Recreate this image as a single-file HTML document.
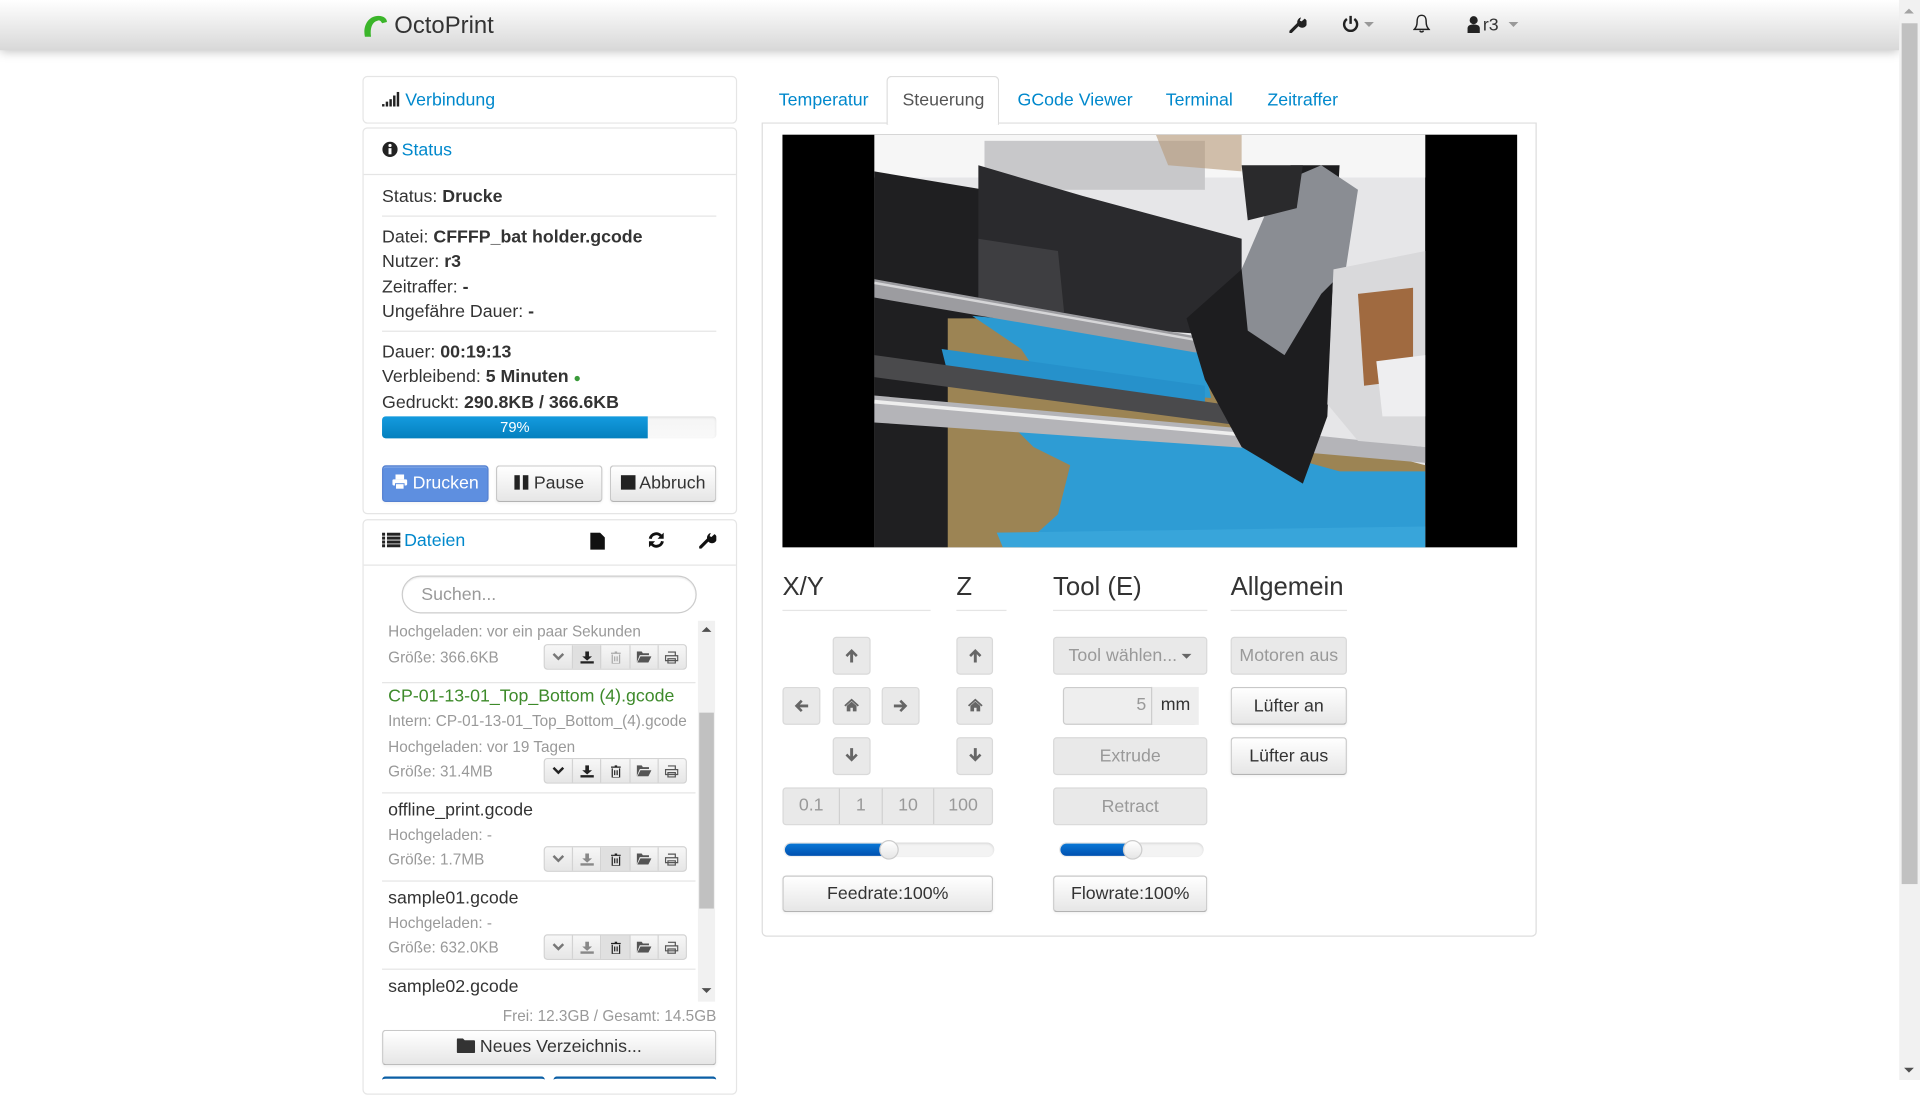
<!DOCTYPE html>
<html><head><meta charset="utf-8">
<style>
html,body{margin:0;padding:0;width:1920px;height:1080px;overflow:hidden;background:#fff}
#w{position:absolute;left:0;top:0;width:1568px;height:882px;transform:scale(1.22449);transform-origin:0 0;font-family:"Liberation Sans",Arial,sans-serif;color:#333;font-size:14.5px}
.a{position:absolute;white-space:nowrap}
.lnk{color:#0088cc}
.box{position:absolute;border:1px solid #e5e5e5;border-radius:4px;background:#fff;box-sizing:border-box}
.hr{position:absolute;height:1px;background:#e5e5e5}
.btn{position:absolute;box-sizing:border-box;border:1px solid #c8c8c8;border-bottom-color:#b3b3b3;border-radius:3px;background:linear-gradient(#fff,#e6e6e6);text-align:center;color:#333;font-size:14.5px;box-shadow:inset 0 1px 0 rgba(255,255,255,.2),0 1px 2px rgba(0,0,0,.05)}
.dis{background:#e9e9e9;color:#999;border-color:#d9d9d9;box-shadow:none}
.meta{position:absolute;font-size:12.5px;color:#999;white-space:nowrap}
.fn{position:absolute;font-size:14.5px;color:#333;white-space:nowrap}
.bg{position:absolute;height:21px;width:117px;border:1px solid #d3d3d3;border-radius:3px;background:linear-gradient(#f7f7f7,#e6e6e6);box-sizing:border-box;display:flex}
.bg span{flex:1;border-right:1px solid #d3d3d3;display:flex;align-items:center;justify-content:center}
.bg span:last-child{border-right:none}
h3{margin:0;font-weight:normal;font-size:21px;position:absolute}
</style></head><body><div id="w">

<!-- navbar -->
<div class="a" style="left:0;top:0;width:1551px;height:41px;background:linear-gradient(#fff,#d8d8d8);box-shadow:0 1px 8px rgba(0,0,0,.25)"></div>
<svg class="a" style="left:295px;top:11px" width="22" height="20" viewBox="0 0 22 20"><path d="M3 19 C1 10 6 2 14 2 C18 2 21 4 21 7 L17 8 C16 6 15 5 13 6 C9 7 7 12 8 19 Z" fill="#3bb52a"/></svg>
<div class="a" style="left:322px;top:10px;font-size:19.5px;color:#333">OctoPrint</div>
<svg class="a" style="left:1053px;top:13px" width="14" height="14" viewBox="0 0 14 14"><path d="M1 13 L7 7" stroke="#222" stroke-width="2.6" stroke-linecap="round"/><path d="M6.5 6 A4 4 0 1 0 12.5 2.2 L10 4.5 L8.5 3.8 L9.5 1.2 A4 4 0 0 0 6.5 6Z" fill="#222"/></svg>
<svg class="a" style="left:1096px;top:12px" width="14" height="15" viewBox="0 0 14 15"><path d="M4 3.5 A5.3 5.3 0 1 0 10 3.5" fill="none" stroke="#222" stroke-width="2"/><path d="M7 1 V7.5" stroke="#222" stroke-width="2"/></svg>
<div class="a" style="left:1114px;top:18px;border:4px solid transparent;border-top-color:#999;border-bottom:0"></div>
<svg class="a" style="left:1154px;top:11px" width="14" height="17" viewBox="0 0 14 17"><path d="M7 1.5 C3.8 1.5 3.3 4 3.3 7 C3.3 10 2.5 11.5 1 13 H13 C11.5 11.5 10.7 10 10.7 7 C10.7 4 10.2 1.5 7 1.5Z M5.5 14 A1.6 1.6 0 0 0 8.5 14" fill="none" stroke="#222" stroke-width="1.2"/></svg>
<svg class="a" style="left:1198px;top:13px" width="11" height="14" viewBox="0 0 11 14"><circle cx="5.5" cy="3.5" r="3.3" fill="#222"/><path d="M0.5 14 V10 C0.5 8 2.5 7 5.5 7 C8.5 7 10.5 8 10.5 10 V14Z" fill="#222"/></svg>
<div class="a" style="left:1211px;top:13px;font-size:14.5px">r3</div>
<div class="a" style="left:1232px;top:18px;border:4px solid transparent;border-top-color:#999;border-bottom:0"></div>

<!-- page scrollbar -->
<div class="a" style="left:1551px;top:0;width:17px;height:882px;background:#f1f1f1"></div>
<div class="a" style="left:1553px;top:19px;width:13px;height:703px;background:#c1c1c1"></div>
<div class="a" style="left:1555px;top:7px;border:4px solid transparent;border-bottom-color:#a3a3a3;border-top:0"></div>
<div class="a" style="left:1555px;top:872px;border:4px solid transparent;border-top-color:#505050;border-bottom:0"></div>

<!-- Left: Verbindung -->
<div class="box" style="left:296px;top:62px;width:306px;height:39px"></div>
<svg class="a" style="left:312px;top:75px" width="15" height="12" viewBox="0 0 15 12"><rect x="0" y="10" width="2" height="2" fill="#222"/><rect x="3" y="8" width="2" height="4" fill="#222"/><rect x="6" y="6" width="2" height="6" fill="#222"/><rect x="9" y="3" width="2" height="9" fill="#222"/><rect x="12" y="0" width="2" height="12" fill="#222"/></svg>
<div class="a lnk" style="left:331px;top:74px">Verbindung</div>

<!-- Status -->
<div class="box" style="left:296px;top:104px;width:306px;height:316px"></div>
<div class="hr" style="left:297px;top:142px;width:304px"></div>
<svg class="a" style="left:312px;top:115px" width="13" height="14" viewBox="0 0 13 14"><circle cx="6.5" cy="7" r="6.2" fill="#222"/><circle cx="6.5" cy="3.8" r="1.3" fill="#fff"/><rect x="5.3" y="6" width="2.4" height="5" fill="#fff"/></svg>
<div class="a lnk" style="left:328px;top:115px">Status</div>
<div class="a" style="left:312px;top:153px">Status: <b>Drucke</b></div>
<div class="hr" style="left:312px;top:176px;width:273px"></div>
<div class="a" style="left:312px;top:186px">Datei: <b>CFFFP_bat holder.gcode</b></div>
<div class="a" style="left:312px;top:206px">Nutzer: <b>r3</b></div>
<div class="a" style="left:312px;top:227px">Zeitraffer: <b>-</b></div>
<div class="a" style="left:312px;top:247px">Ungefähre Dauer: <b>-</b></div>
<div class="hr" style="left:312px;top:270px;width:273px"></div>
<div class="a" style="left:312px;top:280px">Dauer: <b>00:19:13</b></div>
<div class="a" style="left:312px;top:300px">Verbleibend: <b>5 Minuten</b> <span style="color:#3a9a3a;font-size:10px">●</span></div>
<div class="a" style="left:312px;top:321px">Gedruckt: <b>290.8KB / 366.6KB</b></div>
<div class="a" style="left:312px;top:340px;width:273px;height:18px;border-radius:3px;background:linear-gradient(#f5f5f5,#f9f9f9);box-shadow:inset 0 1px 2px rgba(0,0,0,.1)"></div>
<div class="a" style="left:312px;top:340px;width:217px;height:18px;border-radius:3px 0 0 3px;background:linear-gradient(#149bdf,#0480be);color:#fff;font-size:12px;text-align:center;line-height:18px">79%</div>
<div class="btn" style="left:312px;top:380px;width:87px;height:30px;line-height:28px;background:#5e8fe0;border-color:#5480d0;color:#fff">
<svg width="13" height="13" viewBox="0 0 13 13" style="vertical-align:-1px"><rect x="3" y="0.5" width="7" height="4" fill="#fff"/><rect x="0.5" y="4.5" width="12" height="5" rx="1" fill="#fff"/><rect x="3" y="8" width="7" height="4.5" fill="#fff" stroke="#5e8fe0" stroke-width="0.8"/></svg> Drucken</div>
<div class="btn" style="left:405px;top:380px;width:87px;height:30px;line-height:28px"><svg width="12" height="12" viewBox="0 0 12 12" style="vertical-align:-1px"><rect x="0" y="0" width="4.5" height="12" fill="#222"/><rect x="7" y="0" width="4.5" height="12" fill="#222"/></svg> Pause</div>
<div class="btn" style="left:498px;top:380px;width:87px;height:30px;line-height:28px"><svg width="12" height="12" viewBox="0 0 12 12" style="vertical-align:-1px"><rect width="12" height="12" fill="#222"/></svg> Abbruch</div>

<!-- Dateien -->
<div class="box" style="left:296px;top:424px;width:306px;height:470px"></div>
<div class="hr" style="left:297px;top:461px;width:304px"></div>
<svg class="a" style="left:312px;top:435px" width="15" height="12" viewBox="0 0 15 12"><g fill="#222"><rect x="0" y="0" width="2.5" height="2.5"/><rect x="4" y="0" width="11" height="2.5"/><rect x="0" y="3.2" width="2.5" height="2.5"/><rect x="4" y="3.2" width="11" height="2.5"/><rect x="0" y="6.4" width="2.5" height="2.5"/><rect x="4" y="6.4" width="11" height="2.5"/><rect x="0" y="9.5" width="2.5" height="2.5"/><rect x="4" y="9.5" width="11" height="2.5"/></g></svg>
<div class="a lnk" style="left:330px;top:434px">Dateien</div>
<svg class="a" style="left:482px;top:435px" width="12" height="14" viewBox="0 0 12 14"><path d="M0 0 H8 L12 4 V14 H0Z" fill="#111"/></svg>
<svg class="a" style="left:529px;top:434px" width="14" height="14" viewBox="0 0 14 14"><path d="M2 6 A5 5 0 0 1 11 4" fill="none" stroke="#111" stroke-width="2.4"/><path d="M13 1 V6 H8Z" fill="#111"/><path d="M12 8 A5 5 0 0 1 3 10" fill="none" stroke="#111" stroke-width="2.4"/><path d="M1 13 V8 H6Z" fill="#111"/></svg>
<svg class="a" style="left:571px;top:434px" width="14" height="14" viewBox="0 0 14 14"><path d="M1 13 L7 7" stroke="#111" stroke-width="2.6" stroke-linecap="round"/><path d="M6.5 6 A4 4 0 1 0 12.5 2.2 L10 4.5 L8.5 3.8 L9.5 1.2 A4 4 0 0 0 6.5 6Z" fill="#111"/></svg>
<div class="a" style="left:328px;top:470px;width:241px;height:31px;border:1px solid #ccc;border-radius:16px;box-sizing:border-box;box-shadow:inset 0 1px 1px rgba(0,0,0,.075)"></div>
<div class="a" style="left:344px;top:478px;color:#999">Suchen...</div>
<!-- list scrollbar -->
<div class="a" style="left:570px;top:507px;width:14px;height:311px;background:#f1f1f1"></div>
<div class="a" style="left:571px;top:582px;width:12px;height:160px;background:#c1c1c1"></div>
<div class="a" style="left:573px;top:512px;border:4px solid transparent;border-bottom-color:#505050;border-top:0"></div>
<div class="a" style="left:573px;top:807px;border:4px solid transparent;border-top-color:#505050;border-bottom:0"></div>

<div class="meta" style="left:317px;top:509px">Hochgeladen: vor ein paar Sekunden</div>
<div class="meta" style="left:317px;top:530px">Größe: 366.6KB</div>
<div class="hr" style="left:312px;top:557px;width:256px"></div>
<div class="fn" style="left:317px;top:561px;color:#3d8a2a">CP-01-13-01_Top_Bottom (4).gcode</div>
<div class="meta" style="left:317px;top:582px">Intern: CP-01-13-01_Top_Bottom_(4).gcode</div>
<div class="meta" style="left:317px;top:603px">Hochgeladen: vor 19 Tagen</div>
<div class="meta" style="left:317px;top:623px">Größe: 31.4MB</div>
<div class="hr" style="left:312px;top:647px;width:256px"></div>
<div class="fn" style="left:317px;top:654px">offline_print.gcode</div>
<div class="meta" style="left:317px;top:675px">Hochgeladen: -</div>
<div class="meta" style="left:317px;top:695px">Größe: 1.7MB</div>
<div class="hr" style="left:312px;top:719px;width:256px"></div>
<div class="fn" style="left:317px;top:726px">sample01.gcode</div>
<div class="meta" style="left:317px;top:747px">Hochgeladen: -</div>
<div class="meta" style="left:317px;top:767px">Größe: 632.0KB</div>
<div class="hr" style="left:312px;top:791px;width:256px"></div>
<div class="fn" style="left:317px;top:798px">sample02.gcode</div>

<!-- button groups -->
<div class="bg" style="left:444px;top:526px"><span><svg width="10" height="7" viewBox="0 0 10 7"><path d="M1 1 L5 5 L9 1" fill="none" stroke="#777" stroke-width="2"/></svg></span><span style="background:#e0e0e0"><svg width="11" height="10" viewBox="0 0 11 10"><path d="M4 0 H7 V4 H9.5 L5.5 7.5 L1.5 4 H4Z M0 8 H11 V10 H0Z" fill="#222"/></svg></span><span><svg width="8" height="10" viewBox="0 0 8 10"><path d="M0 1.5 H8 M1 2.5 V10 H7 V2.5 M3 0.5 H5 M3 4 V8 M5 4 V8" fill="none" stroke="#aaa" stroke-width="1"/></svg></span><span><svg width="12" height="9" viewBox="0 0 12 9"><path d="M0 0 H4 L5 1.5 H10 V3 H2.5 L0 9Z M3 4 H12 L9.5 9 H0.5Z" fill="#555"/></svg></span><span><svg width="11" height="10" viewBox="0 0 11 10"><path d="M2.5 0.5 H8.5 V3 M0.5 3.5 H10.5 V7.5 H0.5Z M2.5 6 H8.5 V9.5 H2.5Z" fill="none" stroke="#555" stroke-width="1"/></svg></span></div>
<div class="bg" style="left:444px;top:619px"><span><svg width="10" height="7" viewBox="0 0 10 7"><path d="M1 1 L5 5 L9 1" fill="none" stroke="#222" stroke-width="2"/></svg></span><span><svg width="11" height="10" viewBox="0 0 11 10"><path d="M4 0 H7 V4 H9.5 L5.5 7.5 L1.5 4 H4Z M0 8 H11 V10 H0Z" fill="#222"/></svg></span><span><svg width="8" height="10" viewBox="0 0 8 10"><path d="M0 1.5 H8 M1 2.5 V10 H7 V2.5 M3 0.5 H5 M3 4 V8 M5 4 V8" fill="none" stroke="#222" stroke-width="1"/></svg></span><span><svg width="12" height="9" viewBox="0 0 12 9"><path d="M0 0 H4 L5 1.5 H10 V3 H2.5 L0 9Z M3 4 H12 L9.5 9 H0.5Z" fill="#555"/></svg></span><span><svg width="11" height="10" viewBox="0 0 11 10"><path d="M2.5 0.5 H8.5 V3 M0.5 3.5 H10.5 V7.5 H0.5Z M2.5 6 H8.5 V9.5 H2.5Z" fill="none" stroke="#555" stroke-width="1"/></svg></span></div>
<div class="bg" style="left:444px;top:691px"><span><svg width="10" height="7" viewBox="0 0 10 7"><path d="M1 1 L5 5 L9 1" fill="none" stroke="#777" stroke-width="2"/></svg></span><span><svg width="11" height="10" viewBox="0 0 11 10"><path d="M4 0 H7 V4 H9.5 L5.5 7.5 L1.5 4 H4Z M0 8 H11 V10 H0Z" fill="#888"/></svg></span><span style="background:#e0e0e0"><svg width="8" height="10" viewBox="0 0 8 10"><path d="M0 1.5 H8 M1 2.5 V10 H7 V2.5 M3 0.5 H5 M3 4 V8 M5 4 V8" fill="none" stroke="#222" stroke-width="1"/></svg></span><span><svg width="12" height="9" viewBox="0 0 12 9"><path d="M0 0 H4 L5 1.5 H10 V3 H2.5 L0 9Z M3 4 H12 L9.5 9 H0.5Z" fill="#555"/></svg></span><span><svg width="11" height="10" viewBox="0 0 11 10"><path d="M2.5 0.5 H8.5 V3 M0.5 3.5 H10.5 V7.5 H0.5Z M2.5 6 H8.5 V9.5 H2.5Z" fill="none" stroke="#555" stroke-width="1"/></svg></span></div>
<div class="bg" style="left:444px;top:763px"><span><svg width="10" height="7" viewBox="0 0 10 7"><path d="M1 1 L5 5 L9 1" fill="none" stroke="#777" stroke-width="2"/></svg></span><span><svg width="11" height="10" viewBox="0 0 11 10"><path d="M4 0 H7 V4 H9.5 L5.5 7.5 L1.5 4 H4Z M0 8 H11 V10 H0Z" fill="#888"/></svg></span><span style="background:#e0e0e0"><svg width="8" height="10" viewBox="0 0 8 10"><path d="M0 1.5 H8 M1 2.5 V10 H7 V2.5 M3 0.5 H5 M3 4 V8 M5 4 V8" fill="none" stroke="#222" stroke-width="1"/></svg></span><span><svg width="12" height="9" viewBox="0 0 12 9"><path d="M0 0 H4 L5 1.5 H10 V3 H2.5 L0 9Z M3 4 H12 L9.5 9 H0.5Z" fill="#555"/></svg></span><span><svg width="11" height="10" viewBox="0 0 11 10"><path d="M2.5 0.5 H8.5 V3 M0.5 3.5 H10.5 V7.5 H0.5Z M2.5 6 H8.5 V9.5 H2.5Z" fill="none" stroke="#555" stroke-width="1"/></svg></span></div>

<div class="meta" style="right:983px;top:823px">Frei: 12.3GB / Gesamt: 14.5GB</div>
<div class="btn" style="left:312px;top:841px;width:273px;height:29px;line-height:27px"><svg width="15" height="12" viewBox="0 0 15 12" style="vertical-align:-1px"><path d="M0 1 Q0 0 1 0 H5 L6.5 1.5 H14 Q15 1.5 15 2.5 V11 Q15 12 14 12 H1 Q0 12 0 11Z" fill="#333"/></svg> Neues Verzeichnis...</div>
<div class="a" style="left:312px;top:879px;width:133px;height:6px;border-top:2px solid #0b5fa5;border-radius:3px"></div>
<div class="a" style="left:452px;top:879px;width:133px;height:6px;border-top:2px solid #0b5fa5;border-radius:3px"></div>

<!-- Tabs -->
<div class="a lnk" style="left:636px;top:74px">Temperatur</div>
<div class="a" style="left:724px;top:62px;width:92px;height:40px;border:1px solid #ddd;border-bottom:none;border-radius:4px 4px 0 0;background:#fff;box-sizing:border-box;z-index:2"></div>
<div class="a" style="left:737px;top:74px;z-index:3;color:#555">Steuerung</div>
<div class="a lnk" style="left:831px;top:74px">GCode Viewer</div>
<div class="a lnk" style="left:952px;top:74px">Terminal</div>
<div class="a lnk" style="left:1035px;top:74px">Zeitraffer</div>
<div class="a" style="left:622px;top:100px;width:633px;height:665px;border:1px solid #ddd;box-sizing:border-box;border-radius:0 0 4px 4px"></div>

<!-- webcam -->
<div class="a" style="left:639px;top:110px;width:600px;height:337px;background:#000"></div>
<svg class="a" style="left:714px;top:110px" width="450" height="337" viewBox="0 0 450 337">
<rect width="450" height="337" fill="#e6e6e8"/>
<rect x="0" y="0" width="450" height="35" fill="#f6f6f6"/>
<rect x="90" y="5" width="180" height="40" fill="#c8c8ca"/>
<!-- wood bed -->
<path d="M55 145 L260 170 L300 230 L450 270 L450 337 L55 337Z" fill="#9c8454"/>
<!-- left dark -->
<path d="M0 30 L90 45 L90 150 L60 150 L60 337 L0 337Z" fill="#1f1f21"/>
<!-- dark blocks -->
<path d="M85 25 L170 50 L300 85 L300 165 L85 150Z" fill="#2a2a2d"/>
<path d="M85 85 L150 95 L155 145 L85 140Z" fill="#3e3e41"/>
<!-- blue -->
<path d="M80 148 L265 165 L275 215 L140 205 L120 175Z" fill="#2b9ad2"/>
<path d="M55 175 L270 205 L270 225 L60 195Z" fill="#2691cb"/>
<path d="M115 240 L290 250 L380 275 L450 275 L450 337 L120 337 L150 310 L160 270 L130 255Z" fill="#2e9cd4"/>
<path d="M100 325 L450 320 L450 337 L105 337Z" fill="#38a5da"/>
<!-- belt -->
<path d="M0 180 L320 225 L318 240 L0 198Z" fill="#4a4a4c"/>
<!-- rods -->
<path d="M0 118 L265 165 L263 178 L0 133Z" fill="#9c9ca0"/>
<path d="M0 121 L265 168" stroke="#d6d6d8" stroke-width="2"/>
<path d="M0 213 L335 243 L450 255 L450 268 L335 258 L0 235Z" fill="#b4b4b8"/>
<path d="M0 218 L335 248" stroke="#eeeeee" stroke-width="3"/>
<!-- carriage -->
<path d="M255 150 L300 110 L340 25 L380 25 L375 110 L370 230 L350 285 L300 255 L270 200Z" fill="#1d1d1f"/>
<path d="M300 110 L330 40 L365 25 L395 45 L385 110 L365 130 L335 180 L305 160Z" fill="#8a8d93"/>
<path d="M300 25 L350 25 L345 60 L305 70Z" fill="#2a2a2c"/>
<!-- motor right -->
<path d="M375 110 L450 95 L450 255 L395 250 L370 220Z" fill="#d9d9db"/>
<path d="M395 130 L440 125 L440 200 L400 205Z" fill="#a06a40"/>
<path d="M410 185 L450 180 L450 230 L415 230Z" fill="#eeeef0"/>
<path d="M230 0 L300 0 L300 30 L240 25Z" fill="#b89a78" opacity=".6"/>
</svg>

<!-- controls -->
<h3 style="left:639px;top:468px">X/Y</h3>
<h3 style="left:781px;top:468px">Z</h3>
<h3 style="left:860px;top:468px">Tool (E)</h3>
<h3 style="left:1005px;top:468px">Allgemein</h3>
<div class="hr" style="left:639px;top:498px;width:121px"></div>
<div class="hr" style="left:781px;top:498px;width:41px"></div>
<div class="hr" style="left:860px;top:498px;width:126px"></div>
<div class="hr" style="left:1005px;top:498px;width:95px"></div>

<div class="btn dis" style="left:680px;top:520px;width:31px;height:31px"></div>
<div class="btn dis" style="left:639px;top:561px;width:31px;height:31px"></div>
<div class="btn dis" style="left:680px;top:561px;width:31px;height:31px"></div>
<div class="btn dis" style="left:720px;top:561px;width:31px;height:31px"></div>
<div class="btn dis" style="left:680px;top:602px;width:31px;height:31px"></div>
<div class="btn dis" style="left:781px;top:520px;width:30px;height:31px"></div>
<div class="btn dis" style="left:781px;top:561px;width:30px;height:31px"></div>
<div class="btn dis" style="left:781px;top:602px;width:30px;height:31px"></div>
<svg class="a" style="left:689px;top:529px" width="13" height="13" viewBox="0 0 13 13"><path d="M6.5 1 L1.5 6 L3 7.5 L5.3 5.2 V12 H7.7 V5.2 L10 7.5 L11.5 6Z" fill="#666"/></svg>
<svg class="a" style="left:790px;top:529px" width="13" height="13" viewBox="0 0 13 13"><path d="M6.5 1 L1.5 6 L3 7.5 L5.3 5.2 V12 H7.7 V5.2 L10 7.5 L11.5 6Z" fill="#666"/></svg>
<svg class="a" style="left:689px;top:610px" width="13" height="13" viewBox="0 0 13 13"><path d="M6.5 12 L1.5 7 L3 5.5 L5.3 7.8 V1 H7.7 V7.8 L10 5.5 L11.5 7Z" fill="#666"/></svg>
<svg class="a" style="left:790px;top:610px" width="13" height="13" viewBox="0 0 13 13"><path d="M6.5 12 L1.5 7 L3 5.5 L5.3 7.8 V1 H7.7 V7.8 L10 5.5 L11.5 7Z" fill="#666"/></svg>
<svg class="a" style="left:648px;top:570px" width="13" height="13" viewBox="0 0 13 13"><path d="M1 6.5 L6 1.5 L7.5 3 L5.2 5.3 H12 V7.7 H5.2 L7.5 10 L6 11.5Z" fill="#666"/></svg>
<svg class="a" style="left:729px;top:570px" width="13" height="13" viewBox="0 0 13 13"><path d="M12 6.5 L7 1.5 L5.5 3 L7.8 5.3 H1 V7.7 H7.8 L5.5 10 L7 11.5Z" fill="#666"/></svg>
<svg class="a" style="left:689px;top:570px" width="13" height="12" viewBox="0 0 13 12"><path d="M6.5 0.5 L0.5 6 L1.5 7 L6.5 2.5 L11.5 7 L12.5 6Z M2.5 6.5 L6.5 3 L10.5 6.5 V11 H7.5 V8 H5.5 V11 H2.5Z" fill="#666"/></svg>
<svg class="a" style="left:790px;top:570px" width="13" height="12" viewBox="0 0 13 12"><path d="M6.5 0.5 L0.5 6 L1.5 7 L6.5 2.5 L11.5 7 L12.5 6Z M2.5 6.5 L6.5 3 L10.5 6.5 V11 H7.5 V8 H5.5 V11 H2.5Z" fill="#666"/></svg>

<div class="a" style="left:639px;top:643px;width:172px;height:31px;border:1px solid #d9d9d9;border-radius:3px;background:#e9e9e9;box-sizing:border-box;display:flex;color:#999;font-size:14.5px;line-height:29px">
<span style="width:45px;text-align:center;border-right:1px solid #d0d0d0">0.1</span><span style="width:34px;text-align:center;border-right:1px solid #d0d0d0">1</span><span style="width:41px;text-align:center;border-right:1px solid #d0d0d0">10</span><span style="flex:1;text-align:center">100</span></div>

<div class="a" style="left:640px;top:688px;width:172px;height:12px;border-radius:6px;background:#f3f3f3;box-shadow:inset 0 1px 2px rgba(0,0,0,.12)"></div>
<div class="a" style="left:641px;top:689px;width:86px;height:10px;border-radius:5px 0 0 5px;background:linear-gradient(#0a77d5,#0050b0)"></div>
<div class="a" style="left:718px;top:686px;width:16px;height:16px;border-radius:50%;background:linear-gradient(#fff,#e6e6e6);border:1px solid #ccc;box-sizing:border-box"></div>
<div class="btn" style="left:639px;top:715px;width:172px;height:30px;line-height:29px">Feedrate:100%</div>

<div class="btn dis" style="left:860px;top:520px;width:126px;height:31px;line-height:30px">Tool wählen... <span style="display:inline-block;border:4px solid transparent;border-top-color:#666;border-bottom:0;vertical-align:2px"></span></div>
<div class="a" style="left:868px;top:561px;width:110px;height:31px;border:1px solid #ccc;border-radius:3px;background:#eee;box-sizing:border-box"></div>
<div class="a" style="left:940px;top:561px;width:38px;height:31px;border-left:1px solid #ccc;background:#eee;text-align:center;line-height:31px;color:#333">mm</div>
<div class="a" style="left:928px;top:568px;color:#999">5</div>
<div class="btn dis" style="left:860px;top:602px;width:126px;height:31px;line-height:30px">Extrude</div>
<div class="btn dis" style="left:860px;top:643px;width:126px;height:31px;line-height:30px">Retract</div>
<div class="a" style="left:865px;top:688px;width:118px;height:12px;border-radius:6px;background:#f3f3f3;box-shadow:inset 0 1px 2px rgba(0,0,0,.12)"></div>
<div class="a" style="left:866px;top:689px;width:60px;height:10px;border-radius:5px 0 0 5px;background:linear-gradient(#0a77d5,#0050b0)"></div>
<div class="a" style="left:917px;top:686px;width:16px;height:16px;border-radius:50%;background:linear-gradient(#fff,#e6e6e6);border:1px solid #ccc;box-sizing:border-box"></div>
<div class="btn" style="left:860px;top:715px;width:126px;height:30px;line-height:29px">Flowrate:100%</div>

<div class="btn dis" style="left:1005px;top:520px;width:95px;height:31px;line-height:30px">Motoren aus</div>
<div class="btn" style="left:1005px;top:561px;width:95px;height:31px;line-height:30px">Lüfter an</div>
<div class="btn" style="left:1005px;top:602px;width:95px;height:31px;line-height:30px">Lüfter aus</div>

</div></body></html>
